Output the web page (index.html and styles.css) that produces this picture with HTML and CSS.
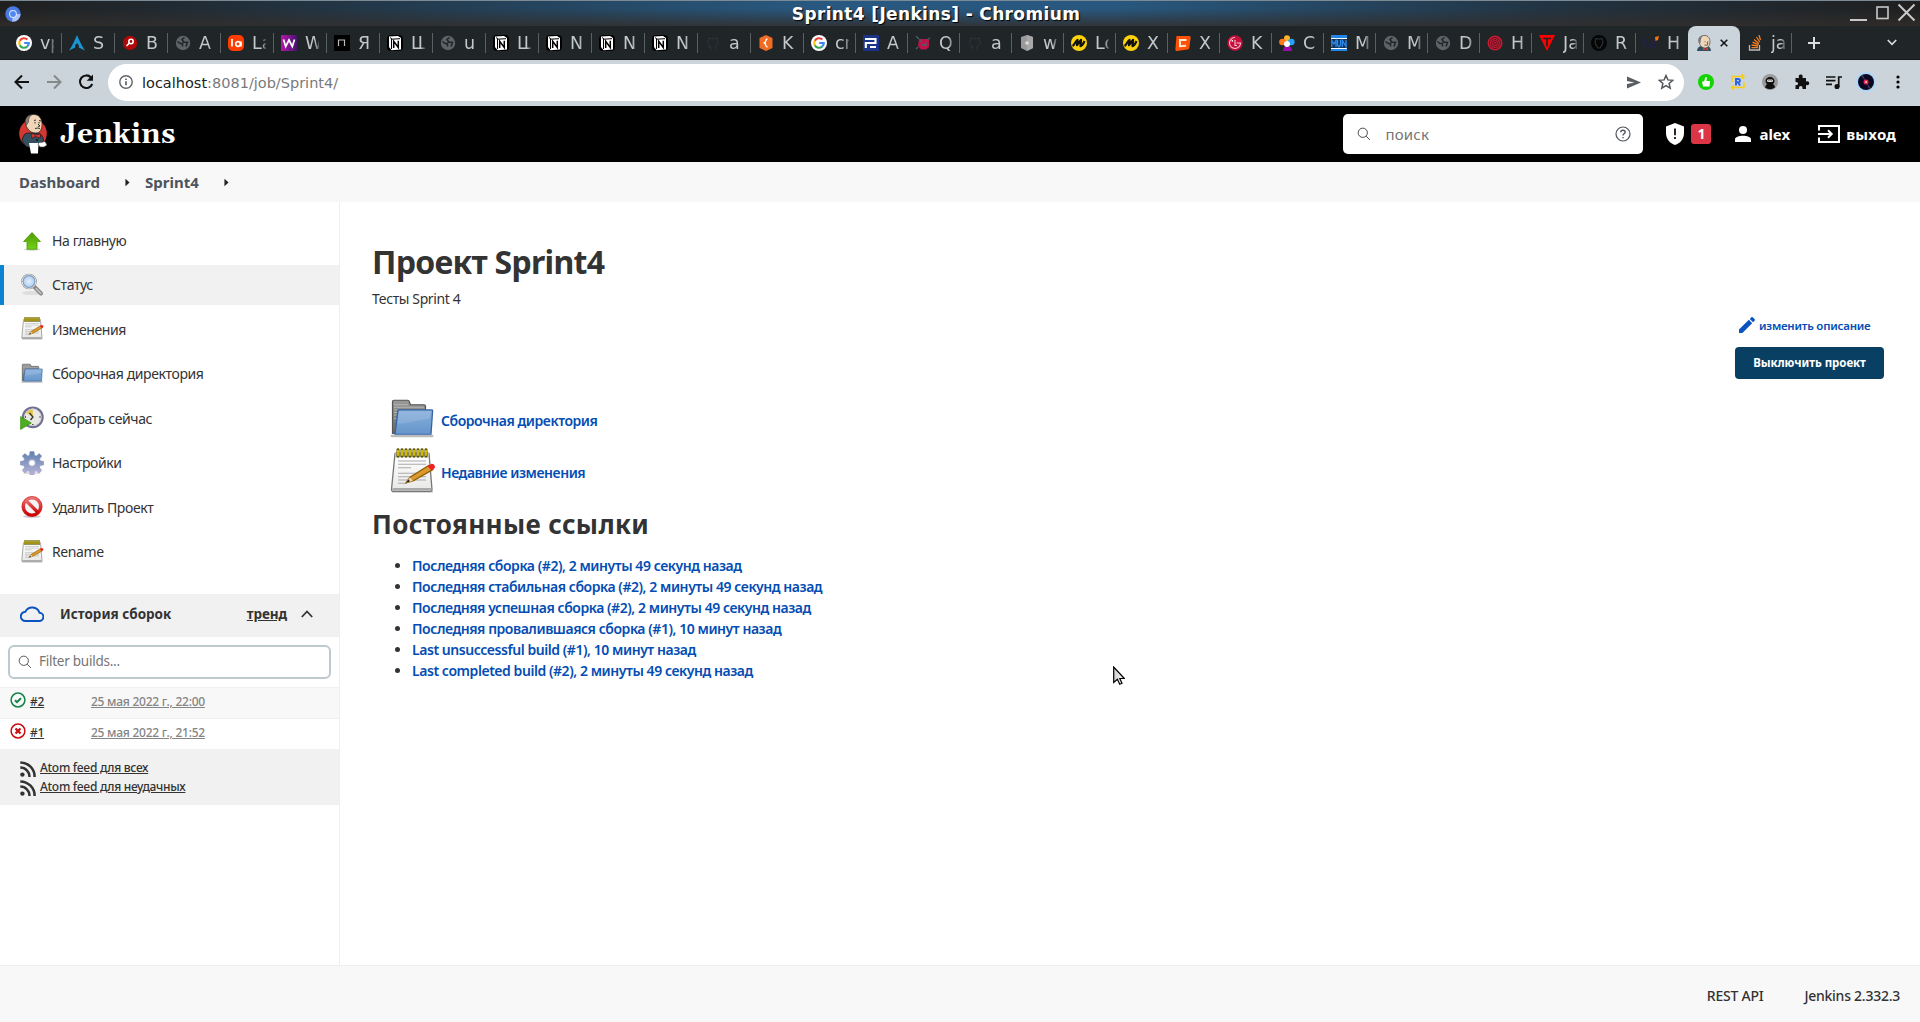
FILE: index.html
```html
<!DOCTYPE html>
<html lang="ru">
<head>
<meta charset="utf-8">
<title>Sprint4 [Jenkins]</title>
<link rel="stylesheet" href="styles.css">
</head>
<body>
<svg class="defs" width="0" height="0">
  <defs>
    <linearGradient id="gGreen" x1="0" y1="0" x2="0" y2="1"><stop offset="0" stop-color="#4e9a06"/><stop offset="1" stop-color="#73d216"/></linearGradient>
    <linearGradient id="gBlue" x1="0" y1="0" x2="0" y2="1"><stop offset="0" stop-color="#85aedb"/><stop offset="1" stop-color="#6796cc"/></linearGradient>
    <linearGradient id="gGrey" x1="0" y1="0" x2="0" y2="1"><stop offset="0" stop-color="#9a9a98"/><stop offset="1" stop-color="#686866"/></linearGradient>
    <linearGradient id="gPaper" x1="0" y1="0" x2="0" y2="1"><stop offset="0" stop-color="#fff"/><stop offset="1" stop-color="#e8e8e6"/></linearGradient>
    <linearGradient id="gGear" x1="0" y1="0" x2="0" y2="1"><stop offset="0" stop-color="#5f80ae"/><stop offset="1" stop-color="#b9b5d8"/></linearGradient>
    <linearGradient id="gRed" x1="0" y1="0" x2="0" y2="1"><stop offset="0" stop-color="#ec7070"/><stop offset="1" stop-color="#cc0000"/></linearGradient>
    <linearGradient id="gPurple"><stop offset="0" stop-color="#b717ac"/><stop offset="1" stop-color="#44146e"/></linearGradient>
    <linearGradient id="gCursor"><stop offset="0" stop-color="#ccc"/><stop offset="1" stop-color="#fff"/></linearGradient>
    <radialGradient id="gLens"><stop offset="0" stop-color="#e3effb"/><stop offset="1" stop-color="#a6c8ee"/></radialGradient>
  </defs>
  <symbol id="i-google" viewBox="0 0 16 16"><circle cx="8" cy="8" r="8" fill="#fff"/><g fill="none" stroke-width="2.1"><path d="M11.4 4.6A4.8 4.8 0 0 0 3.8 5.8" stroke="#ea4335"/><path d="M3.8 5.8a4.8 4.8 0 0 0 0 4.4" stroke="#fbbc05"/><path d="M3.8 10.2a4.8 4.8 0 0 0 7.4 1.4" stroke="#34a853"/><path d="M11.2 11.6A4.8 4.8 0 0 0 12.800 8H8.200" stroke="#4285f4"/></g></symbol>
  <symbol id="i-arch" viewBox="0 0 16 16"><path d="M8 0C6.500 4 3.500 10 0 15.700 3 14 5 13 6 12.800c0-3 1-4.300 2-4.300s2 1.300 2 4.300c1 .2 3 1.200 6 2.900C12.500 10 9.500 4 8 0z" fill="#1b95d3"/></symbol>
  <symbol id="i-search-red" viewBox="0 0 16 16"><circle cx="8" cy="8" r="7.200" fill="#b00808"/><circle cx="9" cy="6.500" r="2.200" fill="none" stroke="#fff" stroke-width="1.600"/><path d="M7.200 8.200 4.500 11" stroke="#fff" stroke-width="1.600"/></symbol>
  <symbol id="i-globe" viewBox="0 0 16 16"><circle cx="8" cy="8" r="7.200" fill="#5f6368"/><path d="M2.500 6.500 5 8.500h2.500v3M9.500 2.500 7 4.500l1.500 2.500 4 .5-1.500 4" stroke="#202528" stroke-width="1.600" fill="none"/></symbol>
  <symbol id="i-la" viewBox="0 0 16 16"><rect width="16" height="16" rx="5" fill="#ff3d00"/><path d="M4 4v7.500M13 6.500v5" stroke="#fff" stroke-width="1.700"/><circle cx="10" cy="9" r="2.300" fill="none" stroke="#fff" stroke-width="1.700"/></symbol>
  <symbol id="i-w" viewBox="0 0 16 16"><rect width="16" height="16" rx="1" fill="url(#gPurple)"/><path d="m2.500 4.500 2.200 7L8 5l3.300 6.500 2.200-7" fill="none" stroke="#fff" stroke-width="1.700"/></symbol>
  <symbol id="i-n" viewBox="0 0 16 16"><rect width="16" height="16"/><path d="M4.500 11V5h6v6" fill="none" stroke="#bbb" stroke-width="1.200"/></symbol>
  <symbol id="i-notion" viewBox="0 0 16 16"><rect width="16" height="16" rx="4" fill="#000"/><path d="M2 1.500 11 1l3 2v11.500l-9.500.7L2 12z" fill="#fff"/><path d="M4.500 4.200 13 3.700M4.500 4v10M3 2.500l2 1.600" stroke="#000" stroke-width="1"/><path d="M6.700 13V6.300l4.600 6.200V5.700" fill="none" stroke="#000" stroke-width="1.500"/></symbol>
  <symbol id="i-github" viewBox="0 0 16 16"><path d="M6 14.500v-2c-2 .4-2.500-1-3.500-1.500M10 14.500v-3.300c3-.6 4-3.700 2.300-6.200V2.700L10 3.600H6L3.700 2.700V5C2 7.500 3 10.600 6 11.200" fill="none" stroke="#2d3439" stroke-width="1"/></symbol>
  <symbol id="i-hex" viewBox="0 0 16 16"><path d="m8 0 6.500 3v10L8 16l-6.500-3V3z" fill="#ef6c22"/><path d="M9.500 4C7 4 8.500 7 6.500 8c2 1 .5 4 3 4" fill="none" stroke="#fff" stroke-width="1.400"/></symbol>
  <symbol id="i-p" viewBox="0 0 16 16"><rect width="16" height="16" rx="1" fill="#1c3487"/><path d="M2 4h10.500v4H2.800v5M7 12h6" fill="none" stroke="#fff" stroke-width="2.100"/></symbol>
  <symbol id="i-bug" viewBox="0 0 16 16"><path d="M4 4h7l3 1v7l-3 2.500H6L3 11z" fill="#bd1348"/><path d="m1 1 3 3M15 3l-3 2M3 12l-2 2M6 4v3M11 7v4M7 10h4" stroke="#49626a" stroke-width="1.300"/></symbol>
  <symbol id="i-cube" viewBox="0 0 16 16"><path d="m8 0 6 2v11l-6 3-6-3V2z" fill="#9a9a9a"/><path d="m8 0 6 2v11l-6 3z" fill="#a8a8a8"/><circle cx="8" cy="8" r="1.800" fill="#ddd"/></symbol>
  <symbol id="i-miro" viewBox="0 0 16 16"><circle cx="8" cy="8" r="8" fill="#fdd30b"/><path d="M1.500 11c2-1 3-5 5-6L6 10l4-5-.5 6c1 0 2.500-1.500 4-5" fill="none" stroke="#111" stroke-width="2.300" stroke-linejoin="round"/></symbol>
  <symbol id="i-c" viewBox="0 0 16 16"><path d="M1.500 1 14 1q2 0 1.600 2l-1.300 10q-.3 1.500-2 1.600L2 16q-1.800.2-1.600-2z" fill="#ff5208"/><path d="M11.500 5H5v6.200l6-.4" fill="none" stroke="#ffe6cf" stroke-width="2"/></symbol>
  <symbol id="i-lg" viewBox="0 0 16 16"><circle cx="8" cy="8" r="7.700" fill="#c70f3c"/><path d="M8 2.500A5.500 5.500 0 1 0 13.500 8H9.500M8 5v5.500h2" fill="none" stroke="#f6c8d2" stroke-width="1.100"/><circle cx="5.300" cy="5.800" r=".9" fill="#fff"/></symbol>
  <symbol id="i-people" viewBox="0 0 16 16"><circle cx="8" cy="3.200" r="3" fill="#ffb32a"/><circle cx="3.500" cy="7" r="3.300" fill="#ff7b1a"/><circle cx="12.300" cy="7" r="3.300" fill="#23a3ff"/><path d="M4 16q0-5 4.500-5t4.500 5z" fill="#9c0bab"/><circle cx="8" cy="9" r="3" fill="#fff"/></symbol>
  <symbol id="i-mvn" viewBox="0 0 16 16"><path d="M0 0h16v3H0zM0 14h16v2H0z" fill="#2286e8"/><path d="M0 3h16v1H0zM0 13h16v1H0z" fill="#fff"/><path d="M0 4h16v9H0z" fill="#153452"/><path d="M.8 12V5.500L3 9l2-3.500V12M6.500 5v5.500L8 12l1.500-2V5M11.300 12V5.500L15 11.500V5" fill="none" stroke="#2a8af0" stroke-width="1.300"/></symbol>
  <symbol id="i-ring" viewBox="0 0 16 16"><circle cx="8" cy="8" r="7.500" fill="#c51c35"/><g fill="none" stroke="#62111f"><circle cx="8" cy="8" r="5.500"/><circle cx="8" cy="8" r="3.500"/><circle cx="8" cy="8" r="1.500"/></g></symbol>
  <symbol id="i-t" viewBox="0 0 16 16"><path d="M0 0h16L8 16z" fill="#f00"/><path d="M4 3.500h8M8 3.500v8" stroke="#222" stroke-width="1.700"/></symbol>
  <symbol id="i-dark" viewBox="0 0 16 16"><circle cx="8" cy="8" r="8" fill="#050606"/><path d="M5 3.500q3.500 1 6 0 2 4-.5 7L9 13H7l-1.500-2.500q-2.500-3-.5-7z" fill="none" stroke="#2b3236" stroke-width="1.200"/></symbol>
  <symbol id="i-smile" viewBox="0 0 16 16"><path d="M4 5H1v7h2M9 5h2v7H9M3.500 7h1M7.500 7h1M4 10q2 1.500 4 0" fill="none" stroke="#251f57" stroke-width="1.200"/><path d="m12 2 4-1-1 4-2.500 1z" fill="#f87408"/></symbol>
  <symbol id="i-so" viewBox="0 0 16 16"><path d="M2.500 10v5h10v-5" fill="none" stroke="#bcbbbb" stroke-width="1.300"/><path d="M4.500 12.700h6.500M4.600 10l6.500 1M5.500 7.200l6 2.400M7 4.500l5 4M9.500 2l3.300 5M12 0l1.500 5" stroke="#f48024" stroke-width="1.300"/></symbol>
  <symbol id="i-butler-face" viewBox="0 0 16 16"><path d="M1 16c0-3 2-4.500 4-5h7c2 1 3 3 3 5z" fill="#335061"/><path d="M3 5c0-3 3-4.700 6-4.500 3 0 5 3 5 6 0 4-2 6.500-5 6.500-4 0-6-4-6-8z" fill="#f0d6b7" stroke="#333" stroke-width=".6"/><path d="M3 8C1.500 4 3 0 8 .5 5 1.500 5 4 4.500 8z" fill="#777"/><path d="M9 6.300v.8M12 6.300v.8M8.500 10q2 .7 3.500-.4M11 7l1 1.500-1 .3" stroke="#333" stroke-width=".8" fill="none"/><path d="m7 12.500 2.500 1.200 2.500-1.200v3l-2.500-1L7 15.500z" fill="#d33833"/></symbol>
  <symbol id="i-notepad" viewBox="0 0 48 48"><g transform="translate(0 -.3) scale(1 .95)"><path d="M4 46.500h41" stroke="#ccc" stroke-width="2"/><path d="M7 6h34l3 38q0 2-2 2H5.500q-2 0-2-2z" fill="url(#gPaper)" stroke="#777" stroke-width="1.300"/><path d="M4.500 42.500h38.500v2.500H4.500z" fill="#aaa"/><path d="M7 5h34v5H7z" fill="#b8b8b0"/><path d="M10 14h28M10 17.500h28M10 21h13M10 27h28M10 30.500h28M10 34h28M10 37.500h9" stroke="#aaa" stroke-width="1.100"/><path d="M10 2v7M14 2v7M18 2v7M22 2v7M26 2v7M30 2v7M34 2v7M38 2v7" stroke="#5e5500" stroke-width="3" stroke-linecap="round"/><path d="M10 3v5M14 3v5M18 3v5M22 3v5M26 3v5M30 3v5M34 3v5M38 3v5" stroke="#edd400" stroke-width="1.600" stroke-linecap="round"/><path d="m18 37 4-6 19-12.500 4 4.500L25 35z" fill="#d99a2b" stroke="#8f5902" stroke-width="1.200"/><path d="m22 31 3 4-7 2z" fill="#f0d0a0"/><path d="m18 37 2.500-3.500 1.500 2z" fill="#222"/><path d="m39.500 19.500 4-2.500q3.500 0 3.500 4L43.500 24z" fill="#e22"/></g></symbol>
  <symbol id="i-folder" viewBox="0 0 48 48"><g transform="translate(0 1.700) scale(1 .87)"><path d="M4 44h40" stroke="#bbb" stroke-width="3" stroke-linecap="round"/><path d="M4.500 41V4.500Q4.500 3 6 3h13.500q1.500 0 1.800 1.500L22.500 8H36q1.500 0 1.500 1.500V41z" fill="url(#gGrey)" stroke="#555" stroke-width="1.200"/><path d="M6 8h14M6 11h30M6 14h5M6 17h3M6 20h3M6 24h2" stroke="#b5b5b3" stroke-width="1"/><path d="M10 14h34q.8 0 .6 1.300L43 42H7z" fill="url(#gBlue)" stroke="#3465a4" stroke-width="1.300"/><path d="M11 15.500h32l-.8 8C31 26 21 29 9.500 30z" fill="#fff" opacity=".13"/></g></symbol>
  <symbol id="i-loupe" viewBox="0 0 24 24"><ellipse cx="12" cy="20" rx="10" ry="2" fill="#ddd"/><path d="m14.500 14 6.500 6.500" stroke="#888" stroke-width="4" stroke-linecap="round"/><path d="m16 15.500 4.700 4.700" stroke="#c5c5c5" stroke-width="1.600" stroke-linecap="round"/><circle cx="9" cy="8.500" r="6.800" fill="url(#gLens)" stroke="#8e8e8e" stroke-width="2"/><circle cx="9" cy="8.500" r="6.800" fill="none" stroke="#e6e6e6" stroke-width="1"/><circle cx="9" cy="8.500" r="5.700" fill="none" stroke="#6c9cd2" stroke-width=".7"/></symbol>
  <symbol id="i-up" viewBox="0 0 24 24"><ellipse cx="12" cy="20.500" rx="8" ry="1.200" fill="#ccc"/><path d="M12 3.500 20.500 12.500H17v7.700H7v-7.700H3.500z" fill="url(#gGreen)" stroke="#4e9a06" stroke-width=".8"/></symbol>
  <symbol id="i-clock" viewBox="0 0 24 24"><circle cx="12.800" cy="11.300" r="9.800" fill="#e9e9e4" stroke="#6f6f92" stroke-width="2.200"/><circle cx="12.800" cy="11.300" r="8.400" fill="none" stroke="#c8c8d4" stroke-width=".8"/><path d="M12.800 11.300 6 6.500 9.500 3.800h3.300z" fill="#e5c54b"/><path d="m9.500 7 3.500 4-2.500 3M5 11h1M19.500 11h1M12.800 18v1" stroke="#333" stroke-width="1.300" fill="none"/><path d="M.6 10.500 11.300 17 .6 23.500z" fill="#4cae1d" stroke="#3c8d0d" stroke-width=".7"/></symbol>
  <symbol id="i-gear" viewBox="0 0 24 24"><ellipse cx="12" cy="22" rx="9" ry="1.500" fill="#ddd"/><path d="M10 .5h4l.6 3.700 1.700.7 3-2.300 2.400 2.500-2.100 3 .7 1.700 3.500.6v3.500l-3.500.7-.8 1.800 2.200 3-2.600 2.600-3-2.200-1.700.7-.6 3.500h-3.600l-.6-3.500-1.800-.7-3 2.200-2.500-2.600 2.200-3-.8-1.800L.2 13.900v-3.500l3.600-.6.7-1.700-2.200-3 2.500-2.500 3 2.300 1.600-.7z" fill="url(#gGear)" stroke="#8791b8" stroke-width=".5"/><circle cx="12" cy="12" r="4" fill="#9faac9"/><circle cx="12" cy="12" r="2.800" fill="#fff"/></symbol>
  <symbol id="i-stop" viewBox="0 0 24 24"><ellipse cx="12" cy="21.500" rx="9" ry="1.500" fill="#ccc"/><g fill="none" stroke="url(#gRed)" stroke-width="3.300"><circle cx="12" cy="11.500" r="8.600" fill="#f4f4f4"/><path d="m6 5.500 12 12"/></g><circle cx="12" cy="11.500" r="10.100" fill="none" stroke="#c22" stroke-width=".6"/></symbol>
  <symbol id="i-search" viewBox="0 0 16 16" fill="none" stroke="currentColor"><circle cx="6.600" cy="6.600" r="5.300"/><path d="m10.500 10.500 4.200 4.200"/></symbol>
  <symbol id="i-rss" viewBox="0 0 16 16"><circle cx="2.400" cy="13.600" r="2.200" fill="#333"/><path d="M.3 6.500A9.200 9.200 0 0 1 9.500 16M.3 1.400A14.300 14.300 0 0 1 14.600 16" fill="none" stroke="#333" stroke-width="2.500"/></symbol>
  <symbol id="i-caret" viewBox="0 0 6 10"><path d="M.5.500 5.500 5l-5 4.500z" fill="#222"/></symbol>
</svg>

<div class="titlebar">
  <svg class="app-icon" viewBox="0 0 16 16"><circle cx="8" cy="8" r="7.700" fill="#4a7be4"/><path d="M8 8h7.500A7.600 7.600 0 0 1 7 15.500z" fill="#a8c4f8"/><circle cx="8" cy="8" r="3.900" fill="#dce7fd"/><circle cx="8" cy="8" r="2.900" fill="#5188f0"/></svg>
  <span class="window-title">Sprint4 [Jenkins] - Chromium</span>
  <svg class="window-controls" width="66" height="26" viewBox="0 0 66 26" fill="none" stroke="#c8c8c8"><path d="M0 19h17" stroke-width="2"/><rect x="27" y="6" width="11" height="11.500" stroke-width="1.600"/><path d="m48.500 3.500 16 16m0-16-16 16" stroke-width="2"/></svg>
</div>

<div class="tabs">
  <div class="tab"><svg><use href="#i-google"/></svg><span>vp</span></div>
  <div class="tab"><svg><use href="#i-arch"/></svg><span>S</span></div>
  <div class="tab"><svg><use href="#i-search-red"/></svg><span>B</span></div>
  <div class="tab"><svg><use href="#i-globe"/></svg><span>A</span></div>
  <div class="tab"><svg><use href="#i-la"/></svg><span>La</span></div>
  <div class="tab"><svg><use href="#i-w"/></svg><span>W</span></div>
  <div class="tab"><svg><use href="#i-n"/></svg><span>Я</span></div>
  <div class="tab"><svg><use href="#i-notion"/></svg><span>Ш</span></div>
  <div class="tab"><svg><use href="#i-globe"/></svg><span>u</span></div>
  <div class="tab"><svg><use href="#i-notion"/></svg><span>Ш</span></div>
  <div class="tab"><svg><use href="#i-notion"/></svg><span>N</span></div>
  <div class="tab"><svg><use href="#i-notion"/></svg><span>N</span></div>
  <div class="tab"><svg><use href="#i-notion"/></svg><span>N</span></div>
  <div class="tab"><svg><use href="#i-github"/></svg><span>a</span></div>
  <div class="tab"><svg><use href="#i-hex"/></svg><span>K</span></div>
  <div class="tab narrow"><svg><use href="#i-google"/></svg><span>cr</span></div>
  <div class="tab narrow"><svg><use href="#i-p"/></svg><span>A</span></div>
  <div class="tab narrow"><svg><use href="#i-bug"/></svg><span>Q</span></div>
  <div class="tab narrow"><svg><use href="#i-github"/></svg><span>a</span></div>
  <div class="tab narrow"><svg><use href="#i-cube"/></svg><span>w</span></div>
  <div class="tab narrow"><svg><use href="#i-miro"/></svg><span>Lo</span></div>
  <div class="tab narrow"><svg><use href="#i-miro"/></svg><span>X</span></div>
  <div class="tab narrow"><svg><use href="#i-c"/></svg><span>X</span></div>
  <div class="tab narrow"><svg><use href="#i-lg"/></svg><span>K</span></div>
  <div class="tab narrow"><svg><use href="#i-people"/></svg><span>C</span></div>
  <div class="tab narrow"><svg><use href="#i-mvn"/></svg><span>M</span></div>
  <div class="tab narrow"><svg><use href="#i-globe"/></svg><span>M</span></div>
  <div class="tab narrow"><svg><use href="#i-globe"/></svg><span>D</span></div>
  <div class="tab narrow"><svg><use href="#i-ring"/></svg><span>H</span></div>
  <div class="tab narrow"><svg><use href="#i-t"/></svg><span>Ja</span></div>
  <div class="tab narrow"><svg><use href="#i-dark"/></svg><span>R</span></div>
  <div class="tab narrow last"><svg><use href="#i-smile"/></svg><span>H</span></div>
  <div class="tab active"><svg><use href="#i-butler-face"/></svg><svg class="close" viewBox="0 0 8 8"><path d="m.7.700 6.600 6.600m0-6.600L.7 7.300" stroke="#111" stroke-width="1.500"/></svg></div>
  <div class="tab narrow after"><svg><use href="#i-so"/></svg><span>ja</span></div>
  <svg class="new-tab" viewBox="0 0 12 12"><path d="M6 0v12M0 6h12" stroke="#ddd" stroke-width="2"/></svg>
  <svg class="tab-search" viewBox="0 0 10 7"><path d="m.8 1 4.200 4.300L9.200 1" fill="none" stroke="#ddd" stroke-width="1.600"/></svg>
</div>

<div class="toolbar">
  <svg class="nav" viewBox="0 0 16 16" fill="none" stroke="#111" stroke-width="2"><path d="M15 8H2M8 1.500 1.500 8 8 14.500"/></svg>
  <svg class="nav" viewBox="0 0 16 16" fill="none" stroke="#84898c" stroke-width="2"><path d="M1 8h13M8 1.500 14.500 8 8 14.500"/></svg>
  <svg class="nav" viewBox="0 0 16 16" fill="none" stroke="#111" stroke-width="2.100"><path d="M13 3.500A6.300 6.300 0 1 0 14.200 10"/><path d="M15 .5v6.300H8.700z" fill="#111" stroke="none"/></svg>
  <div class="omnibox">
    <svg class="info" viewBox="0 0 14 14" fill="none" stroke="#5f6368" stroke-width="1.400"><circle cx="7" cy="7" r="6.200"/><path d="M7 6.200v4M7 3.500v1.500" stroke-width="1.700"/></svg>
    <span class="url">localhost<i>:8081/job/Sprint4/</i></span>
    <svg class="send" viewBox="0 0 15 13"><path d="M0 0l15 6.500L0 13V8l8-1.500L0 5z" fill="#5a5e62"/></svg>
    <svg class="star" viewBox="0 0 16 16"><path d="m8 1.500 1.900 4.400 4.800.4-3.600 3.200 1.100 4.700L8 11.700l-4.200 2.500 1.100-4.700L1.300 6.300l4.800-.4z" fill="none" stroke="#54585c" stroke-width="1.500"/></svg>
  </div>
  <div class="extensions">
    <svg viewBox="0 0 16 16"><circle cx="8" cy="8" r="8" fill="#12d400"/><path d="M4 7.500h2L7.500 3q1.500-.3 1.300 1.300L8.500 7H12l-.5 5.500H5z" fill="#fff"/></svg>
    <svg viewBox="0 0 16 16" fill="none" stroke="#f7cd10" stroke-width="1.500"><path d="M2 8V2.500h12M14 8v5.500H2M11.500 0 14 2.500 12 5M4 11.500 1.500 13.500 4 16"/><path d="M6 11.500V5h2.500q1.500.2 1.500 1.700T8.500 8.300H6M8 8.300l2 3.200" stroke="#2763e9" stroke-width="1.900"/></svg>
    <svg viewBox="0 0 16 16"><circle cx="8" cy="8" r="8" fill="#9b9b9b"/><path d="M3.500 7a4.500 4 0 0 1 9 0q0 2-1.500 3 2 1 2 3.500-5 3.500-10 0Q3.500 11 5 10 3.500 9 3.500 7z" fill="#111"/><rect x="5" y="5.500" width="6" height="2.500" rx="1.200" fill="#e8e8e8"/><path d="M6.500 6.700h.8M8.700 6.700h.8" stroke="#111"/></svg>
    <svg viewBox="0 0 16 16"><path d="M1.500 4H5q-1-3.500 1.700-3.500T8.500 4H12v3.500q3.300-.8 3.300 1.700T12 11v4H8.500q.3-3-1.800-3T5 15H1.500v-3.700q2.700.2 2.700-1.700T1.500 8z" fill="#111"/></svg>
    <svg viewBox="0 0 16 16" fill="none" stroke="#111" stroke-width="1.700"><path d="M0 3h9.500M0 6.700h9.500M0 10.300h6M12.700 13V3H16"/><circle cx="11" cy="12.500" r="1.700" fill="#111"/></svg>
    <svg class="avatar" viewBox="0 0 20 20"><circle cx="10" cy="10" r="10" fill="#acd8fb"/><circle cx="10" cy="10" r="8" fill="#0c0720"/><path d="m10 10-5-6 2-1.200zM10 10l5 6-2 1.200z" fill="#34364e"/><circle cx="10" cy="10" r="2.500" fill="#e3236d"/><circle cx="10" cy="10" r="1" fill="#ffd650"/></svg>
    <svg class="kebab" viewBox="0 0 4 16"><circle cx="2" cy="3" r="1.600"/><circle cx="2" cy="8" r="1.600"/><circle cx="2" cy="13" r="1.600"/></svg>
  </div>
</div>

<header class="page-header">
  <svg class="logo" viewBox="0 0 28 40"><ellipse cx="14" cy="19.500" rx="13.800" ry="14.300" fill="#d33833"/><path d="M4 23c1-3 3-4 6-4h9c3 1 5 3 5.500 7l-1.500 4-4 3H8l-3-3-2-4z" fill="#335061" stroke="#111" stroke-width=".7"/><path d="M7 6C8 1 13-.2 17 .8c4 1 6 5 6 9.500 0 5-2 8.700-6 8.700-3 0-6-1-8-4-2-2.500-3-5.500-2-9z" fill="#f0d6b7" stroke="#222" stroke-width=".7"/><path d="M7.500 11C4.500 7 7 1.500 13 .5 10 3 9.500 4.500 9.500 8z" fill="#8a8078" stroke="#222" stroke-width=".5"/><path d="M16 8v1.500M20 8v1.500M15 6.500l2-.5M20 6.500l2 .5M16 14.500q3-1 5 0M19 10l2 2-2 .5" fill="none" stroke="#222" stroke-width=".9"/><path d="M12 19.500q1.500-.5 4 1.500l5-1.200q1 2 .3 4.200L16 22.500l-3 2z" fill="#d33833" stroke="#311" stroke-width=".6"/><path d="M10 29h9.500l-.5 10.500h-7z" fill="#fff"/><path d="M19 30q1.500-2.500 3-1.500l4-1 2 3.500-3 2h-4z" fill="#fff" stroke="#444" stroke-width=".6"/><circle cx="18" cy="26" r="1" fill="#111"/></svg>
  <span class="brand">Jenkins</span>
  <div class="search-box">
    <svg class="search-icon"><use href="#i-search"/></svg>
    <span>поиск</span>
    <svg class="help" viewBox="0 0 16 16" fill="none" stroke="#4d545d" stroke-width="1.200"><circle cx="8" cy="8" r="7"/><path d="M5.800 6.200C5.800 3.500 10.200 3.600 10.200 6.100 10.200 7.800 8 7.800 8 9.500M8 11v1.300" stroke-width="1.400"/></svg>
  </div>
  <svg class="shield" viewBox="0 0 18 22"><path d="M9 0l9 3.500V10c0 6-4 10.500-9 12C4 20.500 0 16 0 10V3.500z" fill="#fff"/><path d="M9 5.500v6.700M9 14v2" stroke="#111" stroke-width="1.800"/></svg>
  <span class="alert-count">1</span>
  <svg class="person" viewBox="0 0 16 16" fill="#fff"><circle cx="8" cy="4" r="4"/><path d="M0 16v-2.500C0 11 4 9.800 8 9.800s8 1.200 8 3.700V16z"/></svg>
  <a class="user">alex</a>
  <svg class="logout" viewBox="0 0 22 18" fill="none" stroke="#fff" stroke-width="2"><path d="M1 5.500V1h20v16H1v-4.500M0 9h13M10 5.300 13.700 9 10 12.700"/></svg>
  <a class="exit">выход</a>
</header>

<nav class="breadcrumbs">
  <a>Dashboard</a><svg class="c1"><use href="#i-caret"/></svg><a>Sprint4</a><svg class="c2"><use href="#i-caret"/></svg>
</nav>

<div class="page-body">
  <aside class="side-panel">
    <div class="tasks">
      <a class="task"><svg><use href="#i-up"/></svg>На главную</a>
      <a class="task current"><svg><use href="#i-loupe"/></svg>Статус</a>
      <a class="task"><svg><use href="#i-notepad"/></svg>Изменения</a>
      <a class="task"><svg><use href="#i-folder"/></svg>Сборочная директория</a>
      <a class="task"><svg><use href="#i-clock"/></svg>Собрать сейчас</a>
      <a class="task"><svg><use href="#i-gear"/></svg>Настройки</a>
      <a class="task"><svg><use href="#i-stop"/></svg>Удалить Проект</a>
      <a class="task"><svg><use href="#i-notepad"/></svg>Rename</a>
    </div>
    <section class="history">
      <div class="history-head">
        <svg class="cloud" viewBox="0 0 24 16"><path d="M5.500 15h13.500a4.100 4.100 0 0 0 .5-8.200A7.700 7.700 0 0 0 5.300 5.800 4.600 4.600 0 0 0 5.500 15z" fill="none" stroke="#0b53c2" stroke-width="1.900"/></svg>
        <span class="history-title">История сборок</span>
        <a class="trend">тренд</a>
        <svg class="chevron" viewBox="0 0 12 8"><path d="m.8 7 5.200-5.500L11.200 7" fill="none" stroke="#333" stroke-width="1.800"/></svg>
      </div>
      <div class="filter"><svg><use href="#i-search"/></svg>Filter builds...</div>
      <div class="build even">
        <svg viewBox="0 0 16 16" fill="none" stroke="#138347"><circle cx="8" cy="8" r="6.900" stroke-width="1.500"/><path d="m5 8.200 2 2 4-4" stroke-width="2"/></svg>
        <a class="num">#2</a><a class="date">25 мая 2022 г., 22:00</a>
      </div>
      <div class="build">
        <svg viewBox="0 0 16 16" fill="none" stroke="#cc0e13"><circle cx="8" cy="8" r="6.900" stroke-width="1.500"/><path d="m5.500 5.500 5 5m0-5-5 5" stroke-width="2.300"/></svg>
        <a class="num">#1</a><a class="date">25 мая 2022 г., 21:52</a>
      </div>
      <div class="feeds">
        <div><svg><use href="#i-rss"/></svg><a>Atom feed для всех</a></div>
        <div><svg><use href="#i-rss"/></svg><a>Atom feed для неудачных</a></div>
      </div>
    </section>
  </aside>

  <main class="main-panel">
    <h1>Проект Sprint4</h1>
    <p class="description">Тесты Sprint 4</p>
    <div class="actions">
      <a class="edit"><svg viewBox="0 0 18 18" fill="#0b53c2"><path d="M0 14.200V18h3.800L14.800 6.900 11.100 3.200zM17.700 4c.4-.4.4-1 0-1.400L15.400.3c-.4-.4-1-.4-1.400 0l-1.900 1.900 3.700 3.700z"/></svg>изменить описание</a>
      <button class="disable">Выключить проект</button>
    </div>
    <div class="shortcuts">
      <a><svg><use href="#i-folder"/></svg>Сборочная директория</a>
      <a><svg><use href="#i-notepad"/></svg>Недавние изменения</a>
    </div>
    <h2>Постоянные ссылки</h2>
    <ul class="permalinks">
      <li><a>Последняя сборка (#2), 2 минуты 49 секунд назад</a></li>
      <li><a>Последняя стабильная сборка (#2), 2 минуты 49 секунд назад</a></li>
      <li><a>Последняя успешная сборка (#2), 2 минуты 49 секунд назад</a></li>
      <li><a>Последняя провалившаяся сборка (#1), 10 минут назад</a></li>
      <li><a>Last unsuccessful build (#1), 10 минут назад</a></li>
      <li><a>Last completed build (#2), 2 минуты 49 секунд назад</a></li>
    </ul>
  </main>
</div>

<footer class="page-footer"><a>REST API</a><a>Jenkins 2.332.3</a></footer>

<svg class="cursor" viewBox="0 0 12 20"><path d="M.7 1v15.500l3.700-3.300 2.300 5 2.300-1-2.200-4.700h4.500z" fill="url(#gCursor)" stroke="#000" stroke-width="1.200"/></svg>
</body>
</html>
```
FILE: styles.css
```css
* { box-sizing: border-box; }

body {
  margin: 0;
  height: 1022px;
  display: flex;
  flex-direction: column;
  overflow: hidden;
  background: #fff;
  color: #333;
  font: 14px/21px "Noto Sans", "Liberation Sans", sans-serif;
}

svg { flex: none; display: block; }
.defs { position: absolute; }

/* Window frame */
.titlebar {
  height: 26px;
  flex: none;
  display: grid;
  grid-template-columns: 70px 1fr 70px;
  align-items: center;
  border-top: 1px solid #7b8a94;
  background:
    linear-gradient(180deg, rgba(50, 46, 44, 0) 30%, rgba(50, 46, 44, .85) 100%),
    linear-gradient(90deg, #1f1f1f 0, #22323f 15%, #28587f 42%, #28587f 58%, #22323f 82%, #1f1f1f 100%);
}
.app-icon { width: 16px; height: 16px; margin-left: 5px; }
.window-title {
  text-align: center;
  padding-right: 48px;
  color: #fff;
  font: bold 17px/24px "DejaVu Sans", sans-serif;
  letter-spacing: .36px;
  text-shadow: 1px 1px 1px #000;
}

/* Tab strip */
.tabs {
  height: 34px;
  flex: none;
  display: flex;
  align-items: center;
  padding-left: 9px;
  background: #202528;
  border-bottom: 1px solid #15191b;
}
.tab {
  width: 53px;
  height: 20px;
  flex: none;
  display: flex;
  align-items: center;
  padding-left: 7px;
  border-right: 1px solid #596064;
  color: #c3c8cb;
  font: 17.5px/22px "DejaVu Sans", sans-serif;
}
.tab.narrow { width: 52px; }
.tab svg { width: 16px; height: 16px; }
.tab span {
  width: 14px;
  margin-left: 8px;
  overflow: hidden;
  white-space: nowrap;
  -webkit-mask-image: linear-gradient(90deg, #000 70%, rgba(0, 0, 0, .25));
  mask-image: linear-gradient(90deg, #000 70%, rgba(0, 0, 0, .25));
}
.tab.last { border-right-color: transparent; }
.tab.active {
  width: 52px;
  height: 34px;
  margin-bottom: -1px;
  padding-left: 8px;
  border: 0;
  border-radius: 8px 8px 0 0;
  background: #cbd4da;
}
.tab .close { width: 8px; height: 8px; margin-left: 8px; }
.new-tab { width: 12px; height: 12px; margin-left: 16px; }
.tab-search { width: 10px; height: 7px; margin-left: auto; margin-right: 23px; }

/* Browser toolbar */
.toolbar {
  height: 46px;
  flex: none;
  display: flex;
  align-items: center;
  padding: 0 14px 1px;
  background: #cbd4da;
}
.nav { width: 16px; height: 16px; margin: 0 16px 1px 0; }
.omnibox {
  width: 1576px;
  height: 37px;
  margin-left: -2px;
  display: flex;
  align-items: center;
  padding: 0 10px 0 11px;
  border-radius: 19px;
  background: #fff;
}
.info { width: 14px; height: 14px; margin-bottom: 1px; }
.url { margin-left: 9px; color: #202124; font: 14.5px/20px "DejaVu Sans", sans-serif; }
.url i { font-style: normal; color: #777a7d; }
.send { width: 14px; height: 13px; margin-left: auto; margin-bottom: 1px; }
.star { width: 16px; height: 16px; margin: 0 0 1px 17px; }
.extensions { display: flex; align-items: center; gap: 16px; margin: 0 0 1px 14px; }
.extensions svg { width: 16px; height: 16px; }
.extensions .avatar { width: 20px; height: 20px; margin: 0 -2px; }
.extensions .kebab { width: 4px; margin-left: 6px; }

/* Jenkins header */
.page-header {
  height: 56px;
  flex: none;
  display: flex;
  align-items: center;
  padding: 0 24px 0 19px;
  background: #000;
  color: #fff;
  font-weight: 700;
}
.logo { width: 28px; height: 40px; }
.brand { margin: 1px auto 0 13px; font: bold 28px/36px Gelasio, Georgia, "DejaVu Serif", serif; letter-spacing: .35px; }
.search-box {
  width: 300px;
  height: 40px;
  display: flex;
  align-items: center;
  padding: 0 12px 0 14px;
  border-radius: 5px;
  background: #fff;
  color: #757575;
  font-size: 15px;
  font-weight: 400;
  letter-spacing: .2px;
}
.search-box span { margin-left: 14px; }
.search-icon { width: 14px; height: 14px; color: #333; }
.help { width: 16px; height: 16px; margin-left: auto; }
.shield { width: 18px; height: 22px; margin-left: 23px; }
.alert-count {
  width: 20px;
  height: 20px;
  margin-left: 7px;
  border-radius: 3px;
  background: #dc3545;
  text-align: center;
  line-height: 20px;
  font-size: 14px;
}
.person { width: 16px; height: 16px; margin-left: 24px; }
.user { margin-left: 8px; font-size: 15px; }
.logout { width: 22px; height: 18px; margin-left: 28px; }
.exit { margin-left: 6px; font-size: 15px; letter-spacing: .2px; }

.breadcrumbs {
  height: 40px;
  flex: none;
  display: flex;
  align-items: center;
  padding-left: 19px;
  background: #f8f8f8;
  color: #4d545d;
  font-size: 15px;
  font-weight: 700;
}
.breadcrumbs svg { width: 5px; height: 9px; }
.c1 { margin: 0 15px 0 25px; }
.c2 { margin-left: 25px; }

/* Content area */
.page-body { flex: 1; display: flex; min-height: 0; }
.side-panel { width: 340px; flex: none; border-right: 1px solid #efefef; }
.tasks { display: flex; flex-direction: column; gap: 4.44px; padding-top: 18.5px; }
.task {
  height: 40px;
  display: flex;
  align-items: center;
  gap: 8px;
  padding-left: 20px;
  letter-spacing: -.4px;
}
.task svg { width: 24px; height: 24px; }
.task.current { padding-left: 16px; border-left: 4px solid #0b84d4; background: #f1f1f1; }

.history { margin-top: 22.4px; }
.history-head {
  height: 43px;
  display: flex;
  align-items: center;
  padding: 0 26px 2px 20px;
  background: #f1f1f1;
  font-size: 13.5px;
  font-weight: 700;
}
.cloud { width: 24px; height: 16px; }
.history-title { margin-left: 16px; }
.trend { margin-left: auto; text-decoration: underline; letter-spacing: -.1px; }
.chevron { width: 12px; height: 8px; margin-left: 14px; }
.filter {
  height: 34px;
  margin: 8px;
  display: flex;
  align-items: center;
  gap: 7px;
  padding-left: 8px;
  border: 2px solid #bdc9cf;
  border-radius: 6px;
  color: #757575;
  font-size: 13.5px;
  letter-spacing: -.25px;
}
.filter svg { width: 14px; height: 14px; color: #444; }
.build {
  height: 31px;
  display: flex;
  align-items: center;
  padding: 0 0 3px 10px;
  border-top: 1px solid #f1f1f1;
  font-size: 12px;
  font-weight: 500;
  letter-spacing: -.25px;
}
.build.even { background: #f8f8f8; }
.build svg { width: 16px; height: 16px; margin-top: -2px; }
.build a { text-decoration: underline; }
.num { width: 61px; margin-left: 4px; }
.date { color: #858585; }
.feeds {
  height: 56px;
  padding: 9px 0 0 20px;
  background: #f1f1f1;
  font-size: 12px;
  font-weight: 500;
  letter-spacing: -.3px;
}
.feeds div { height: 19px; display: flex; align-items: center; gap: 4px; }
.feeds svg { width: 16px; height: 16px; margin-top: 4px; }
.feeds a { text-decoration: underline; }

/* Main panel */
.main-panel { flex: 1; padding: 0 36px 0 32px; display: flex; flex-direction: column; }
h1 { margin: 38px 0 0; font-size: 32px; line-height: 44px; font-weight: 700; letter-spacing: -.7px; }
.description { margin: 4px 0 0; line-height: 22px; letter-spacing: -.38px; }
.actions { align-self: flex-end; display: flex; flex-direction: column; margin-top: 3px; }
.edit {
  height: 24px;
  display: flex;
  align-items: center;
  gap: 4px;
  padding-left: 4px;
  color: #044db3;
  font-size: 11.5px;
  font-weight: 600;
  letter-spacing: -.22px;
}
.edit svg { width: 16px; height: 16px; }
.disable {
  width: 149px;
  height: 32px;
  margin-top: 10px;
  padding: 0;
  border: 0;
  border-radius: 4px;
  background: #093f62;
  color: #fff;
  font: 700 11.5px/18px "Noto Sans", sans-serif;
  letter-spacing: -.05px;
}
.shortcuts { display: flex; flex-direction: column; gap: 4px; margin: 17px 0 0 16px; }
.shortcuts a {
  height: 48px;
  display: flex;
  align-items: center;
  gap: 5px;
  color: #044db3;
  font-weight: 600;
  letter-spacing: -.45px;
}
.shortcuts svg { width: 48px; height: 48px; }
h2 { margin: 8px 0 0; font-size: 26px; line-height: 40px; font-weight: 700; letter-spacing: .35px; }
.permalinks { margin: 11px 0 0; padding-left: 40px; color: #333; }
.permalinks a { color: #044db3; font-weight: 600; letter-spacing: -.45px; }

.page-footer {
  height: 57px;
  flex: none;
  display: flex;
  justify-content: flex-end;
  align-items: center;
  gap: 41px;
  padding: 2px 20px 0;
  border-top: 1px solid #efefef;
  background: #f8f8f8;
  font-weight: 500;
  letter-spacing: -.25px;
}

.cursor { position: absolute; left: 1113px; top: 666px; width: 12px; height: 20px; }
```
